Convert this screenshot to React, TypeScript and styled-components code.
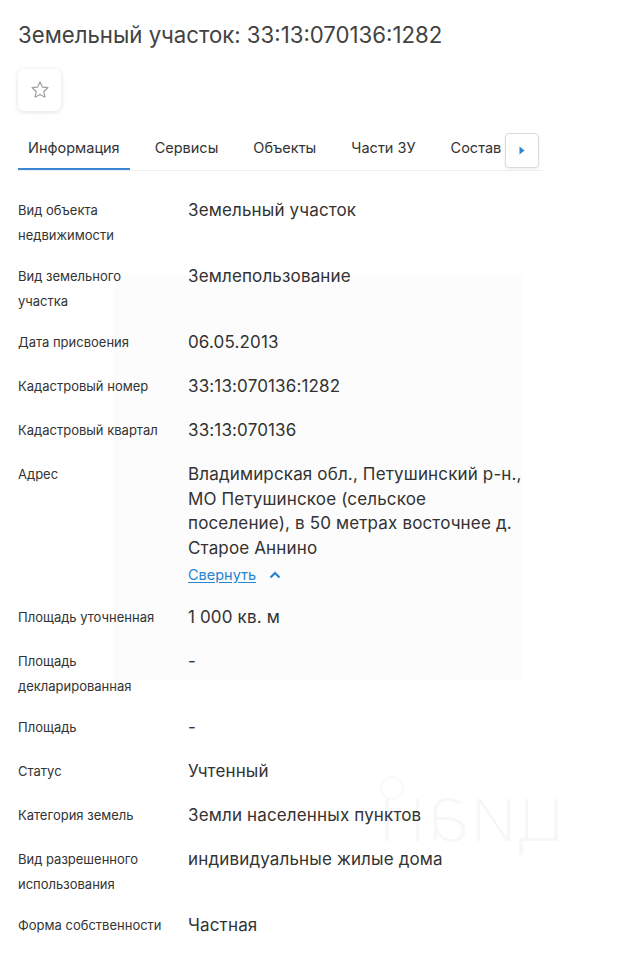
import React from "react";
import styled, { createGlobalStyle } from "styled-components";

const GlobalStyle = createGlobalStyle`
  body {
    margin: 0;
    background: #ffffff;
    font-family: Inter, "Noto Sans", "Liberation Sans", sans-serif;
    color: #333333;
  }
`;

const Page = styled.div`
  position: relative;
  padding: 20px 18px 0 18px;
  width: 525px;
`;

const Title = styled.h1`
  margin: 0;
  font-size: 22.2px;
  line-height: 30px;
  font-weight: 400;
  color: #424242;
`;

const StarButton = styled.button`
  margin-top: 19px;
  width: 43px;
  height: 42px;
  border: none;
  border-radius: 6px;
  background: #ffffff;
  box-shadow: 0 1px 5px rgba(0, 0, 0, 0.13);
  display: flex;
  align-items: center;
  justify-content: center;
  padding: 0;
`;

const TabsWrap = styled.div`
  position: relative;
  margin-top: 19px;
  border-bottom: 1px solid #eeeeee;
`;

const TabList = styled.div`
  display: flex;
  gap: 15px;
  overflow: hidden;
  white-space: nowrap;
`;

const Tab = styled.div<{ $active?: boolean }>`
  padding: 8px 10px 10px 10px;
  font-size: 14.5px;
  line-height: 20px;
  color: #333333;
  border-bottom: 3px solid ${(p) => (p.$active ? "#3b87d4" : "transparent")};
  margin-bottom: -1px;
`;

const ScrollButton = styled.div`
  position: absolute;
  right: 4px;
  top: 3px;
  width: 32px;
  height: 33px;
  border: 1px solid #dcdcdc;
  border-radius: 4px;
  background: #ffffff;
  box-shadow: 0 1px 3px rgba(0, 0, 0, 0.08);
  display: flex;
  align-items: center;
  justify-content: center;
`;

const Fade = styled.div`
  position: absolute;
  right: 38px;
  top: 0;
  width: 3px;
  height: 38px;
  background: #ffffff;
`;

const List = styled.div`
  margin-top: 27px;
  display: flex;
  flex-direction: column;
  gap: 16px;
`;

const Row = styled.div`
  display: grid;
  grid-template-columns: 170px 1fr;
  align-items: start;
  min-height: 28px;
`;

const Label = styled.div`
  font-size: 13px;
  line-height: 25px;
  color: #333333;
  padding-right: 10px;
`;

const Value = styled.div`
  font-size: 17px;
  line-height: 24.5px;
  letter-spacing: 0.15px;
  color: #333333;
`;

const Collapse = styled.div`
  display: flex;
  align-items: center;
  gap: 13px;
  margin: 3px 0 2px;
  font-size: 14.5px;
  line-height: 24px;
  letter-spacing: 0;
`;

const CollapseLink = styled.span`
  color: #2b86d1;
  text-decoration: underline;
  text-underline-offset: 2px;
`;

const Watermark = styled.div`
  position: absolute;
  left: 113px;
  top: 275px;
  width: 409px;
  height: 405px;
  background: rgba(0, 0, 0, 0.012);
  pointer-events: none;
`;

const LogoMark = styled.div`
  position: absolute;
  left: 378px;
  top: 760px;
  font-size: 80px;
  line-height: 100px;
  font-weight: 300;
  color: rgba(0, 0, 0, 0.035);
  font-family: "Open Sans", sans-serif;
  transform: scaleX(-1);
  pointer-events: none;
`;

const LogoDot = styled.div`
  position: absolute;
  left: 380px;
  top: 776px;
  width: 20px;
  height: 20px;
  border: 2px solid rgba(0, 0, 0, 0.022);
  border-radius: 50%;
  pointer-events: none;
`;

const Star = () => (
  <svg width="22" height="22" viewBox="0 0 24 24" fill="none">
    <path
      d="M12 3.2l2.6 5.6 6.1.7-4.5 4.2 1.2 6.1L12 16.8l-5.4 3 1.2-6.1-4.5-4.2 6.1-.7z"
      stroke="#a0a0a0"
      strokeWidth="1.3"
      strokeLinejoin="round"
    />
  </svg>
);

const Chevron = () => (
  <svg width="12" height="8" viewBox="0 0 12 8">
    <path d="M1.5 6.5L6 2l4.5 4.5" stroke="#2b86d1" strokeWidth="2.2" fill="none" />
  </svg>
);

const Triangle = () => (
  <svg width="6" height="9" viewBox="0 0 6 9">
    <path d="M0.5 0.5L5.5 4.5L0.5 8.5z" fill="#2b86d1" />
  </svg>
);

type Item = { label: React.ReactNode; value: React.ReactNode };

const items: Item[] = [
  { label: <>Вид объекта<br />недвижимости</>, value: "Земельный участок" },
  { label: <>Вид земельного<br />участка</>, value: "Землепользование" },
  { label: "Дата присвоения", value: "06.05.2013" },
  { label: "Кадастровый номер", value: "33:13:070136:1282" },
  { label: "Кадастровый квартал", value: "33:13:070136" },
  {
    label: "Адрес",
    value: (
      <>
        Владимирская обл., Петушинский р-н.,
        <br />
        МО Петушинское (сельское
        <br />
        поселение), в 50 метрах восточнее д.
        <br />
        Старое Аннино
        <Collapse>
          <CollapseLink>Свернуть</CollapseLink>
          <Chevron />
        </Collapse>
      </>
    ),
  },
  { label: "Площадь уточненная", value: "1 000 кв. м" },
  { label: <>Площадь<br />декларированная</>, value: "-" },
  { label: "Площадь", value: "-" },
  { label: "Статус", value: "Учтенный" },
  { label: "Категория земель", value: "Земли населенных пунктов" },
  { label: <>Вид разрешенного<br />использования</>, value: "индивидуальные жилые дома" },
  { label: "Форма собственности", value: "Частная" },
];

const tabs = ["Информация", "Сервисы", "Объекты", "Части ЗУ", "Состав"];

export default function App() {
  return (
    <>
      <GlobalStyle />
      <Page>
        <Title>Земельный участок: 33:13:070136:1282</Title>
        <StarButton aria-label="В избранное">
          <Star />
        </StarButton>
        <TabsWrap>
          <TabList>
            {tabs.map((t, i) => (
              <Tab key={t} $active={i === 0}>
                {t}
              </Tab>
            ))}
          </TabList>
          <Fade />
          <ScrollButton>
            <Triangle />
          </ScrollButton>
        </TabsWrap>
        <List>
          {items.map((it, i) => (
            <Row key={i}>
              <Label>{it.label}</Label>
              <Value>{it.value}</Value>
            </Row>
          ))}
        </List>
        <Watermark />
        <LogoDot />
        <LogoMark>циан</LogoMark>
      </Page>
    </>
  );
}
